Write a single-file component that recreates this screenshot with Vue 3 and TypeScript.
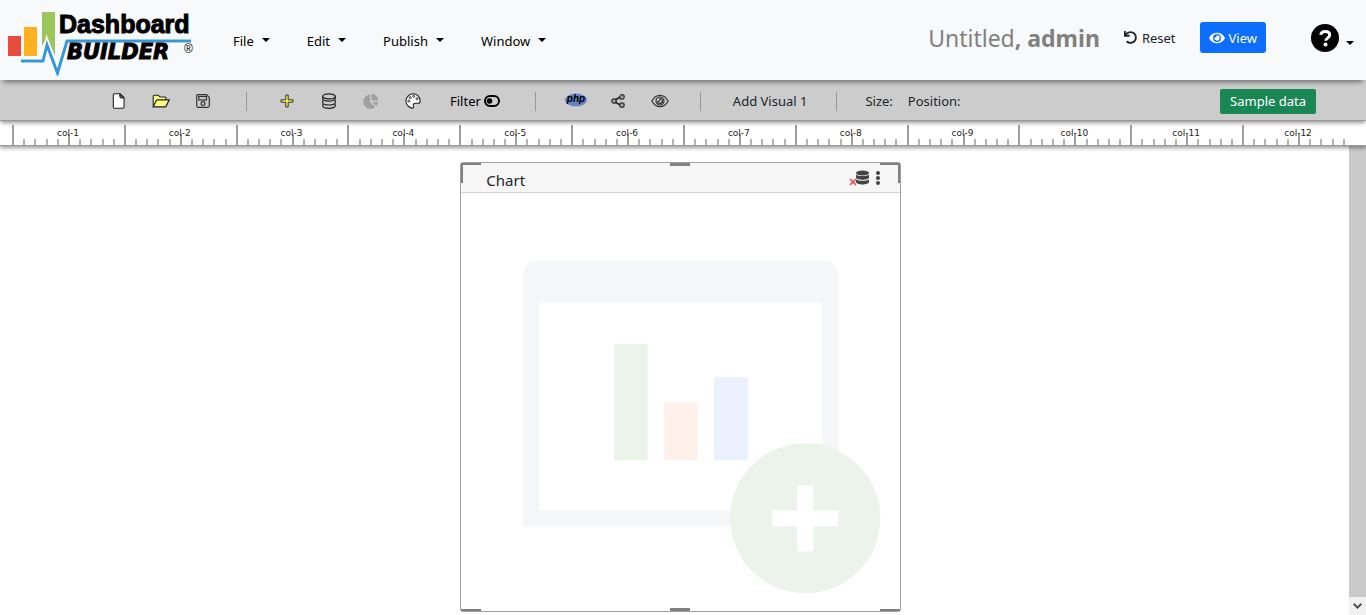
<script setup lang="ts">
const menus: string[] = ['File', 'Edit', 'Publish', 'Window']
const columns: number[] = Array.from({ length: 12 }, (_, i) => i + 1)
const handles: string[] = ['top-left', 'top', 'top-right', 'bottom-left', 'bottom', 'bottom-right']
</script>

<template>
  <div class="page">
    <header class="header">
      <a class="brand" href="#" aria-label="Dashboard Builder">
        <svg width="190" height="68" viewBox="0 0 190 68" aria-hidden="true">
          <rect x="0" y="28" width="13" height="20" fill="#e84c3d" />
          <rect x="16" y="19" width="13" height="29" fill="#ffb01f" />
          <path d="M34 4h13v44l-8-19-5 9z" fill="#9bc65c" />
          <path d="M13 53h22l4-18 10.500 29L59 33h124" fill="none" stroke="#fff" stroke-width="5" />
          <path d="M13 53h22l4-16 10.500 28L59 33h124" fill="none" stroke="#3498db" stroke-width="3" />
          <text class="logo-top" x="51" y="25">Dashboard</text>
          <text class="logo-bottom" x="59" y="51">BUILDER</text>
          <text class="logo-mark" x="176" y="45">®</text>
        </svg>
      </a>
      <nav class="menus">
        <button v-for="menu in menus" :key="menu" class="menu" type="button">
          {{ menu }}<span class="caret"></span>
        </button>
      </nav>
      <div class="title">Untitled<strong>, admin</strong></div>
      <button class="reset" type="button">
        <svg width="13" height="13" viewBox="0 0 512 512" aria-hidden="true">
          <path fill="currentColor" d="M212.333 224.333H12c-6.627 0-12-5.373-12-12V12C0 5.373 5.373 0 12 0h48c6.627 0 12 5.373 12 12v78.112C117.773 39.279 184.260 7.470 258.175 8.007c136.906.994 246.448 111.623 246.157 248.532C504.041 393.258 393.120 504 256.333 504c-64.089 0-122.496-24.313-166.510-64.215-5.099-4.622-5.334-12.554-.467-17.420l33.967-33.967c4.474-4.474 11.662-4.717 16.401-.525C170.760 415.336 211.580 432 256.333 432c97.268 0 176-78.716 176-176 0-97.267-78.716-176-176-176-58.496 0-110.280 28.476-142.274 72.333h98.274c6.627 0 12 5.373 12 12v48c0 6.627-5.373 12-12 12z" />
        </svg>
        Reset
      </button>
      <button class="view" type="button">
        <svg width="16" height="14" viewBox="0 0 576 512" aria-hidden="true">
          <path fill="currentColor" d="M572.520 241.400C518.290 135.590 410.930 64 288 64S57.680 135.640 3.480 241.410a32.350 32.350 0 0 0 0 29.190C57.710 376.410 165.070 448 288 448s230.320-71.640 284.520-177.410a32.350 32.350 0 0 0 0-29.190zM288 400a144 144 0 1 1 144-144 143.930 143.930 0 0 1-144 144zm0-240a95.310 95.310 0 0 0-25.310 3.790 47.850 47.850 0 0 1-66.900 66.900A95.780 95.780 0 1 0 288 160z" />
        </svg>
        View
      </button>
      <button class="help" type="button" aria-label="Help">
        <svg width="28" height="28" viewBox="0 0 28 28" aria-hidden="true">
          <circle cx="14" cy="14" r="14" />
          <path d="M9.500 10.800c.9-2.300 2.400-3.300 4.600-3.300 2.700 0 4.600 1.400 4.600 3.600 0 3-4 3-4 5.700" fill="none" stroke="#fff" stroke-width="3" />
          <circle cx="14.500" cy="20.500" r="2" fill="#fff" />
        </svg>
        <span class="caret"></span>
      </button>
    </header>

    <div class="toolbar">
      <div class="tools">
        <button class="tool" type="button" aria-label="New">
          <svg width="16" height="16" viewBox="0 0 16 16" aria-hidden="true">
            <path d="M3.500.8h5.700l3.900 3.900v9q0 1.500-1.500 1.500h-8q-1.300 0-1.300-1.500V2.200Q2.300.8 3.500.8z" fill="#fff" stroke="#222" stroke-width="1.100" />
            <path d="M8.800.8v2.700q0 1.500 1.500 1.500h2.800z" fill="#555" stroke="#222" />
          </svg>
        </button>
        <button class="tool" type="button" aria-label="Open">
          <svg width="18" height="16" viewBox="0 0 18 16" aria-hidden="true">
            <path d="M1.200 13V3.200q0-1 1-1h4l1.800 1.800h5q1 0 1 1v2" fill="#ffff82" stroke="#222" stroke-width="1.100" />
            <path d="M1.200 13.800 4.300 7.600q.4-.7 1.200-.7h11.600l-3 6.200q-.4.700-1.200.7z" fill="#ffff82" stroke="#222" stroke-width="1.200" />
          </svg>
        </button>
        <button class="tool" type="button" aria-label="Save">
          <svg width="16" height="16" viewBox="0 0 16 16" fill="none" stroke="#333" stroke-width="1.200" aria-hidden="true">
            <path d="M3 1.700h8.600l2.700 2.700v8.400q0 1.500-1.500 1.500H3q-1.300 0-1.300-1.500V3Q1.700 1.700 3 1.700z" />
            <rect x="3.800" y="3.500" width="7.700" height="3.500" />
            <circle cx="8" cy="10.600" r="1.900" />
          </svg>
        </button>
      </div>
      <span class="divider"></span>
      <div class="tools">
        <button class="tool" type="button" aria-label="Add">
          <svg width="14" height="14" viewBox="0 0 14 14" aria-hidden="true">
            <path d="M5.800 1h2.400v4.800H13v2.400H8.200V13H5.800V8.200H1V5.800h4.800z" fill="#fff04a" stroke="#333" />
          </svg>
        </button>
        <button class="tool" type="button" aria-label="Database">
          <svg width="16" height="16" viewBox="0 0 16 16" fill="none" stroke="#222" stroke-width="1.200" aria-hidden="true">
            <ellipse cx="8" cy="3.400" rx="6.300" ry="2.500" />
            <path d="M1.700 3.400v2.200c0 3.300 12.600 3.300 12.600 0V3.400M1.700 7.300v2.200c0 3.300 12.600 3.300 12.600 0V7.300M1.700 11.200v1.600c0 3.300 12.600 3.300 12.600 0v-1.600" />
          </svg>
        </button>
        <button class="tool" type="button" aria-label="Chart" disabled>
          <svg width="16" height="16" viewBox="0 0 16 16" fill="#a0a0a0" aria-hidden="true">
            <path d="M7 1.800V9l5 5A7 7 0 1 1 7 1.800z" />
            <path d="M8.500.7a7 7 0 0 1 6.700 6.700H8.500zM9.300 8.900h6a7 7 0 0 1-2.100 4.200z" />
          </svg>
        </button>
        <button class="tool" type="button" aria-label="Theme">
          <svg width="16" height="16" viewBox="0 0 16 16" aria-hidden="true">
            <path d="M8 .8a7.200 7.200 0 0 0-1 14.300c1.300.1 1.900-.6 1.400-1.800-.7-1.800.2-3 2.100-3h2.700c1.200 0 2-.7 2-2C15.200 4 12.100.8 8 .8z" fill="#fff" stroke="#222" stroke-width="1.100" />
            <g fill="#fff" stroke="#333">
              <circle cx="3.900" cy="8.100" r="1" /><circle cx="5.200" cy="4.600" r="1" /><circle cx="8.700" cy="3.300" r="1" /><circle cx="12" cy="5.600" r="1" />
            </g>
          </svg>
        </button>
      </div>
      <button class="filter" type="button">
        Filter
        <svg width="16" height="12" viewBox="0 0 16 12" aria-hidden="true">
          <rect x="1" y="1" width="14" height="10" rx="5" fill="none" stroke="#000" stroke-width="2" />
          <circle cx="5.500" cy="6" r="2.800" />
        </svg>
      </button>
      <span class="divider after-filter"></span>
      <div class="tools">
        <button class="tool" type="button" aria-label="PHP">
          <svg width="22" height="16" viewBox="0 0 22 16" aria-hidden="true">
            <ellipse cx="11" cy="7" rx="11" ry="6.500" fill="#6681c5" />
            <text class="php" x="11" y="9" text-anchor="middle">php</text>
          </svg>
        </button>
        <button class="tool" type="button" aria-label="Share">
          <svg width="14" height="14" viewBox="0 0 14 14" fill="none" stroke="#333" aria-hidden="true">
            <path d="M3.500 6.300 10 2.500M3.500 7.700 10 11.500" stroke-width="2" />
            <g fill="#aaa" stroke-width="1.300">
              <circle cx="3" cy="7" r="2.200" /><circle cx="11" cy="2.900" r="2.200" /><circle cx="11" cy="11.100" r="2.200" />
            </g>
          </svg>
        </button>
        <button class="tool" type="button" aria-label="Preview">
          <svg width="18" height="16" viewBox="0 0 18 16" fill="none" stroke="#333" stroke-width="1.200" aria-hidden="true">
            <path d="M.9 8C2.800 4.300 5.700 2.300 9 2.300S15.200 4.300 17.100 8c-1.900 3.700-4.800 5.700-8.100 5.700S2.800 11.700.9 8z" />
            <circle cx="9" cy="8" r="4" /><path d="M9 5.500a2.500 2.500 0 1 1-2.400 3.200c1.500.3 2.600-1.200 2.400-3.200z" />
          </svg>
        </button>
      </div>
      <span class="divider before-visual"></span>
      <span class="visual">Add Visual 1</span>
      <span class="divider"></span>
      <span class="metric">Size:</span>
      <span class="metric position">Position:</span>
      <button class="sample" type="button">Sample data</button>
    </div>

    <div class="ruler">
      <div v-for="column in columns" :key="column" class="ruler-column">
        <span v-for="tick in 10" :key="tick" class="tick"></span>
        <span class="ruler-label">col-{{ column }}</span>
      </div>
    </div>

    <div class="workspace">
      <main class="canvas">
        <section class="card">
          <div class="card-head">
            <h2>Chart</h2>
            <button class="card-tool" type="button" aria-label="No data source">
              <svg width="20" height="16" viewBox="0 0 20 16" aria-hidden="true">
                <g fill="#444">
                  <ellipse cx="13.500" cy="3" rx="6.500" ry="2.500" />
                  <path d="M7 4.600c2 2 11 2 13 0v2.800c0 3-13 3-13 0zM7 9.200c2 2 11 2 13 0V12c0 3.300-13 3.300-13 0z" />
                </g>
                <path d="m1 9 6 6M7 9l-6 6" stroke="#f04444" stroke-width="1.500" />
              </svg>
            </button>
            <button class="card-tool more" type="button" aria-label="More">
              <svg width="4" height="16" viewBox="0 0 4 16" fill="#444" aria-hidden="true">
                <circle cx="2" cy="3" r="2" /><circle cx="2" cy="8" r="2" /><circle cx="2" cy="13" r="2" />
              </svg>
            </button>
          </div>
          <div class="card-body">
            <svg class="placeholder" viewBox="0 0 357 332" role="img" aria-label="Add chart">
              <path d="M0 265V16Q0 0 16 0h283q16 0 16 16v249z" fill="#f4f6f8" />
              <path d="M16 42h283v207H16z" fill="#fff" />
              <path d="M91 83h33.500v116H91z" fill="#ecf3eb" />
              <path d="M141 141h33.500v58H141z" fill="#fff0eb" />
              <path d="M191 116h33.500v83H191z" fill="#eaf0fd" />
              <circle cx="282" cy="257" r="75" fill="#ebf3eb" />
              <path d="M274 224h16v25h25v16h-25v25h-16v-25h-25v-16h25z" fill="#fff" />
            </svg>
          </div>
          <span v-for="handle in handles" :key="handle" :class="['handle', handle]"></span>
        </section>
      </main>
      <div class="scrollbar">
        <button class="scroll-down" type="button" aria-label="Scroll down">
          <svg width="9" height="6" viewBox="0 0 9 6" fill="none" stroke="#505050" stroke-width="2" aria-hidden="true">
            <path d="m.7.8 3.800 3.800L8.300.8" />
          </svg>
        </button>
      </div>
    </div>
  </div>
</template>

<style>
body {
  margin: 0;
  overflow: hidden;
}
</style>

<style scoped>
.page {
  display: flex;
  flex-direction: column;
  height: 100vh;
  background: #fff;
  color: #212529;
  font-family: "Noto Sans", "Open Sans", sans-serif;
  font-size: 13px;
  line-height: 20px;
}

* {
  box-sizing: border-box;
}

button {
  display: flex;
  align-items: center;
  margin: 0;
  padding: 0;
  border: 0;
  background: none;
  color: inherit;
  font: inherit;
  white-space: nowrap;
}

svg {
  display: block;
  flex: none;
}

.header {
  position: relative;
  z-index: 3;
  display: flex;
  flex: none;
  align-items: center;
  height: 80px;
  padding: 0 12px 5px 8px;
  background: #f8f9fb;
  box-shadow: 0 5px 5px -3px rgba(0, 0, 0, 0.45);
}

.brand {
  margin-top: 9px;
}

.logo-top {
  font: bold 25px "Liberation Sans", sans-serif;
  stroke: #000;
  stroke-width: 1px;
}

.logo-bottom {
  font: italic bold 21px "DejaVu Sans", sans-serif;
  stroke: #000;
  stroke-width: 1px;
}

.logo-mark {
  font: 12px "Liberation Sans", sans-serif;
}

.menus {
  display: flex;
  flex: 1;
  gap: 37px;
  margin: 7px 0 0 35px;
  color: #000;
}

.menu {
  gap: 8px;
}

.caret {
  border: 4px solid transparent;
  border-top-color: #000;
  border-bottom: 0;
}

.menu .caret {
  margin-bottom: 2px;
}

.title {
  margin-right: 24px;
  color: #808080;
  font-size: 23px;
  line-height: 32px;
  white-space: nowrap;
}

.reset {
  gap: 5px;
  margin-right: 24px;
}

.view {
  gap: 4px;
  height: 31px;
  margin-right: 45px;
  padding: 0 9px;
  border-radius: 3px;
  background: #0d6efd;
  color: #fff;
}

.help {
  gap: 7px;
}

.help .caret {
  margin-top: 10px;
}

.toolbar {
  position: relative;
  z-index: 2;
  display: flex;
  flex: none;
  align-items: center;
  height: 41px;
  padding: 2px 50px 0 98px;
  border-bottom: 1px solid #999;
  background: #ccc;
  box-shadow: 0 3px 4px -1px rgba(0, 0, 0, 0.4);
}

.tools {
  display: flex;
}

.tool {
  justify-content: center;
  width: 42px;
  height: 24px;
}

.divider {
  flex: none;
  width: 1px;
  height: 19px;
  margin: 0 19px 0 22px;
  background: #999;
}

.filter {
  gap: 3px;
  margin-left: 16px;
  color: #000;
}

.divider.after-filter {
  margin: 0 19px 0 35px;
}

.divider.before-visual {
  margin: 0 32px 0 19px;
}

.php {
  font: italic bold 10px "Liberation Sans", sans-serif;
}

.visual {
  margin-right: 7px;
}

.metric {
  margin-left: 9px;
}

.metric.position {
  margin-left: 15px;
}

.sample {
  height: 25px;
  margin-left: auto;
  padding: 0 10px;
  border-radius: 2px;
  background: #198754;
  color: #fff;
}

.ruler {
  position: relative;
  z-index: 1;
  display: flex;
  flex: none;
  height: 25px;
  padding: 4px 12px 0;
  border-bottom: 1px solid #999;
  background: #fff;
  box-shadow: 0 2px 4px rgba(0, 0, 0, 0.4);
}

.ruler-column {
  position: relative;
  display: flex;
  flex: 1;
  align-items: flex-end;
}

.tick {
  flex: 1;
  height: 6px;
  border-left: 2px solid #b4b4b4;
}

.tick:first-child {
  height: 20px;
  border-color: #a0a0a0;
}

.tick:nth-child(6) {
  height: 11px;
  border-color: #a0a0a0;
}

.ruler-label {
  position: absolute;
  top: 2px;
  left: 0;
  width: 100%;
  color: #222;
  font: 9px/12px "DejaVu Sans", sans-serif;
  text-align: center;
}

.workspace {
  display: flex;
  flex: 1;
  min-height: 0;
}

.canvas {
  flex: 1;
  padding: 16px 0 0 12px;
  display: grid;
  grid-template-columns: repeat(12, 1fr);
  margin-right: -5px;
  align-items: start;
}

.card {
  position: relative;
  grid-column: 5 / span 4;
  margin: 0 6px 0 1px;
  border: 1px solid #a0a0a0;
  border-radius: 3px;
}

.card-head {
  display: flex;
  align-items: center;
  height: 30px;
  padding: 0 20px 0 25px;
  border-bottom: 1px solid #d3d3d3;
  background: #f6f6f6;
}

.card-head h2 {
  flex: 1;
  margin: 4px 0 0;
  font-size: 15px;
  font-weight: 400;
  line-height: 22px;
}

.card-tool.more {
  margin-left: 7px;
}

.card-body {
  padding: 68px 19px 18px 62px;
}

.placeholder {
  width: 100%;
}

.handle {
  position: absolute;
  width: 20px;
  height: 20px;
  border: 0 solid #808080;
}

.top-left {
  top: 0;
  left: 0;
  border-width: 2px 0 0 2px;
}

.top-right {
  top: 0;
  right: 0;
  border-width: 2px 2px 0 0;
}

.top,
.bottom {
  left: calc(50% - 10px);
  height: 3px;
  background: #808080;
}

.top {
  top: 0;
}

.bottom {
  bottom: 0;
}

.bottom-left,
.bottom-right {
  bottom: 0;
  height: 2px;
  background: #808080;
}

.bottom-left {
  left: 0;
}

.bottom-right {
  right: 0;
}

.scrollbar {
  position: relative;
  display: flex;
  flex: none;
  align-items: flex-end;
  width: 17px;
  background: #cacaca;
}

.scroll-down {
  justify-content: center;
  width: 17px;
  height: 18px;
  background: #f1f1f1;
}
</style>
